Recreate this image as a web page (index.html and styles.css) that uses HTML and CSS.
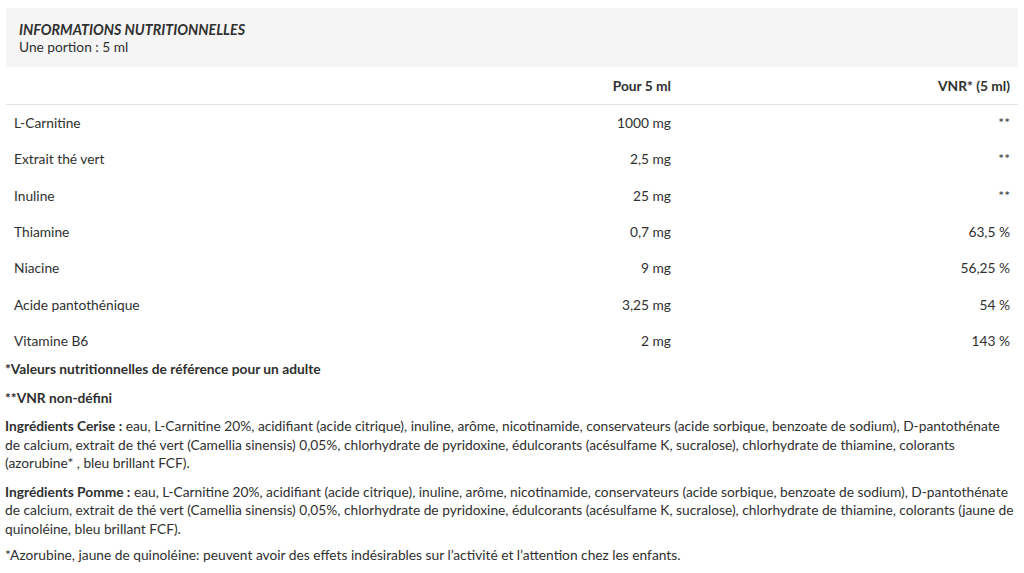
FILE: index.html
```html
<!DOCTYPE html>
<html lang="fr">
<head>
  <meta charset="UTF-8">
  <meta name="viewport" content="width=device-width, initial-scale=1.0">
  <title>Informations nutritionnelles</title>
  <link rel="stylesheet" href="styles.css">
</head>
<body>
  <div class="nutrition">
    <div class="nutrition-head">
      <h2 class="nutrition-title">Informations nutritionnelles</h2>
      <div class="portion">Une portion : 5 ml</div>
    </div>

    <table class="nutrition-table">
      <thead>
        <tr>
          <th class="col-name"></th>
          <th class="col-qty">Pour 5 ml</th>
          <th class="col-vnr">VNR* (5 ml)</th>
        </tr>
      </thead>
      <tbody>
        <tr><td>L-Carnitine</td><td class="num">1000 mg</td><td class="num">**</td></tr>
        <tr><td>Extrait thé vert</td><td class="num">2,5 mg</td><td class="num">**</td></tr>
        <tr><td>Inuline</td><td class="num">25 mg</td><td class="num">**</td></tr>
        <tr><td>Thiamine</td><td class="num">0,7 mg</td><td class="num">63,5 %</td></tr>
        <tr><td>Niacine</td><td class="num">9 mg</td><td class="num">56,25 %</td></tr>
        <tr><td>Acide pantothénique</td><td class="num">3,25 mg</td><td class="num">54 %</td></tr>
        <tr><td>Vitamine B6</td><td class="num">2 mg</td><td class="num">143 %</td></tr>
      </tbody>
    </table>

    <div class="notes">
      <p><strong>*Valeurs nutritionnelles de référence pour un adulte</strong></p>
      <p><strong>**VNR non-défini</strong></p>
      <p><strong>Ingrédients Cerise :</strong> eau, L-Carnitine 20%, acidifiant (acide citrique), inuline, arôme, nicotinamide, conservateurs (acide sorbique, benzoate de sodium), D-pantothénate de calcium, extrait de thé vert (Camellia sinensis) 0,05%, chlorhydrate de pyridoxine, édulcorants (acésulfame K, sucralose), chlorhydrate de thiamine, colorants (azorubine* , bleu brillant FCF).</p>
      <p><strong>Ingrédients Pomme :</strong> eau, L-Carnitine 20%, acidifiant (acide citrique), inuline, arôme, nicotinamide, conservateurs (acide sorbique, benzoate de sodium), D-pantothénate de calcium, extrait de thé vert (Camellia sinensis) 0,05%, chlorhydrate de pyridoxine, édulcorants (acésulfame K, sucralose), chlorhydrate de thiamine, colorants (jaune de quinoléine, bleu brillant FCF).</p>
      <p>*Azorubine, jaune de quinoléine: peuvent avoir des effets indésirables sur l’activité et l’attention chez les enfants.</p>
    </div>
  </div>
</body>
</html>
```

FILE: styles.css
```css
* {
  margin: 0;
  padding: 0;
  box-sizing: border-box;
}

body {
  font-family: Lato, 'Liberation Sans', sans-serif;
  font-size: 13.75px;
  color: #303030;
  background: #fff;
  padding: 8px 6px 0 5px;
}

.nutrition-head {
  background: #f5f5f5;
  margin-left: 1px;
  padding: 13px 13px 12px;
  height: 59px;
}

.nutrition-title {
  font-size: 14.3px;
  font-weight: 700;
  font-style: italic;
  text-transform: uppercase;
  line-height: 17px;
}

.portion {
  line-height: 17px;
}

.nutrition-table {
  width: calc(100% - 1px);
  margin-left: 1px;
  border-collapse: collapse;
}

.nutrition-table th {
  font-weight: 700;
  height: 37px;
  padding: 1px 8px 0;
  text-align: right;
  border-bottom: 1px solid #e2e2e2;
}

.nutrition-table td {
  height: 36.3px;
  padding: 1px 8px 0;
}

.col-vnr {
  width: 339px;
}

.num {
  text-align: right;
}

.notes {
  padding-top: 2px;
}

.notes p {
  line-height: 18.5px;
  margin-bottom: 10px;
}

.notes p:nth-child(2) {
  margin-bottom: 10px;
}

.notes p:nth-child(4) {
  margin-bottom: 8px;
}
```
